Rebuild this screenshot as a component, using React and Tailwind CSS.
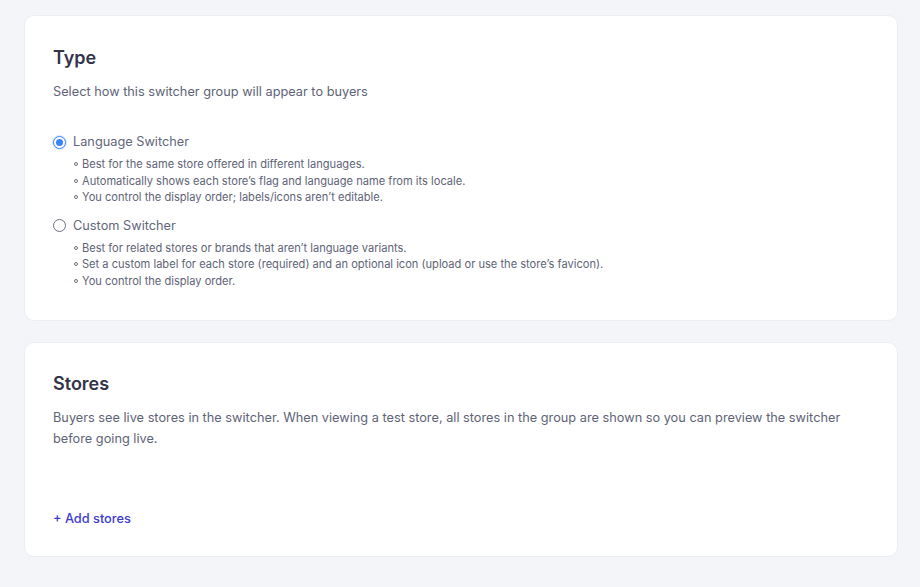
import React from "react";

const languageNotes = [
  "Best for the same store offered in different languages.",
  "Automatically shows each store\u2019s flag and language name from its locale.",
  "You control the display order; labels/icons aren\u2019t editable.",
];

const customNotes = [
  "Best for related stores or brands that aren\u2019t language variants.",
  "Set a custom label for each store (required) and an optional icon (upload or use the store\u2019s favicon).",
  "You control the display order.",
];

function Radio({ checked }) {
  return checked ? (
    <span className="flex h-[13px] w-[13px] shrink-0 items-center justify-center rounded-full border-[1.5px] border-[#3b82f6] bg-white shadow-[0_0_0_1px_#dbeafe]">
      <span className="h-[7px] w-[7px] rounded-full bg-[#3b82f6]" />
    </span>
  ) : (
    <span className="h-[13px] w-[13px] shrink-0 rounded-full border border-[#6b7080] bg-white" />
  );
}

function Option({ checked, label, notes, className }) {
  return (
    <div className={className}>
      <label className="flex h-5 items-center gap-[7px] text-[12.75px] leading-5 text-[#62667a]">
        <Radio checked={checked} />
        <span>{label}</span>
      </label>
      <ul className="mt-[4px] pl-[21px]">
        {notes.map((n) => (
          <li key={n} className="flex items-center gap-[4px] text-[11.1px] leading-[16.5px] text-[#5e6377]">
            <span className="h-[4px] w-[4px] shrink-0 rounded-full border border-[#6b7080]" />
            <span>{n}</span>
          </li>
        ))}
      </ul>
    </div>
  );
}

export default function App() {
  return (
    <div className="min-h-[587px] bg-[#f4f5f9] pt-[15px] pb-[31px] pl-6 pr-[22px] font-['Inter','Liberation_Sans',sans-serif] antialiased">
      <section className="rounded-[10px] border border-[#eceef4] bg-white px-7 pt-7 pb-[31px]">
        <h2 className="text-[18px] font-semibold leading-7 text-[#33344a]">Type</h2>
        <p className="mt-[10px] text-[12.75px] leading-5 text-[#5e6377]">
          Select how this switcher group will appear to buyers
        </p>
        <Option className="mt-[30px]" checked label="Language Switcher" notes={languageNotes} />
        <Option className="mt-[10px]" label="Custom Switcher" notes={customNotes} />
      </section>

      <section className="mt-[21px] rounded-[10px] border border-[#eceef4] bg-white px-7 pt-[27px] pb-[27px]">
        <h2 className="text-[18px] font-semibold leading-7 text-[#33344a]">Stores</h2>
        <p className="mt-[9px] text-[12.75px] leading-[21px] text-[#5e6377]">
          Buyers see live stores in the switcher. When viewing a test store, all stores in the group are shown so you can preview the switcher before going live.
        </p>
        <button className="mt-[60px] block text-[12.75px] font-medium leading-5 text-[#3c3ccf]">
          + Add stores
        </button>
      </section>
    </div>
  );
}
